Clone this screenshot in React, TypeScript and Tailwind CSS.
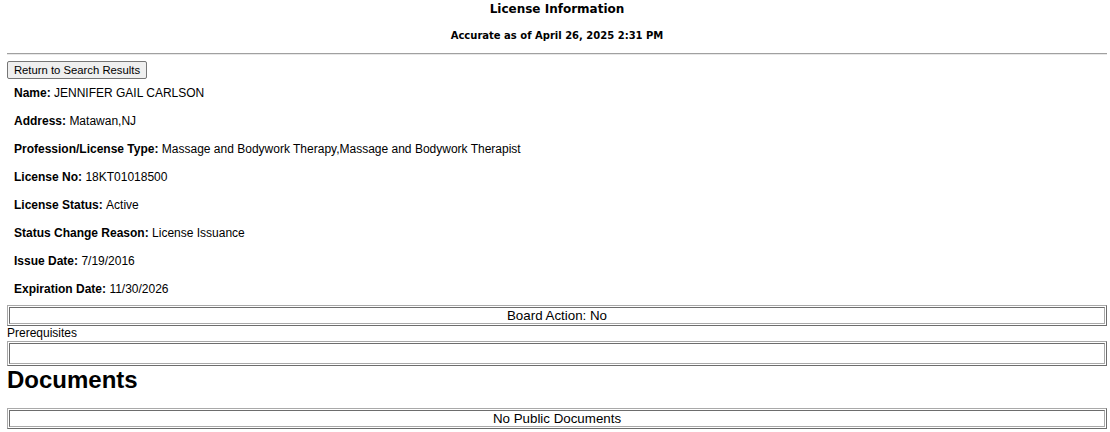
export default function App() {
  const fields = [
    { label: "Name", value: "JENNIFER GAIL CARLSON" },
    { label: "Address", value: "Matawan,NJ" },
    {
      label: "Profession/License Type",
      value: "Massage and Bodywork Therapy,Massage and Bodywork Therapist",
    },
    { label: "License No", value: "18KT01018500" },
    { label: "License Status", value: "Active" },
    { label: "Status Change Reason", value: "License Issuance" },
    { label: "Issue Date", value: "7/19/2016" },
    { label: "Expiration Date", value: "11/30/2026" },
  ]

  return (
    <div className="w-[1110px] h-[432px] bg-white text-black font-['Liberation_Sans',Arial,sans-serif] pl-[7px] pr-[3px]">
      <div className="text-center font-['DejaVu_Sans',Verdana,sans-serif] font-bold">
        <div className="text-[12px] leading-[14px] pt-[2px]">License Information</div>
        <div className="text-[10px] leading-[12px] mt-[14px]">Accurate as of April 26, 2025 2:31 PM</div>
      </div>

      <div className="mt-[11px] border-t border-t-[#a0a0a0] border-b border-b-[#e8e8e8]" />

      <button className="mt-[6px] h-[18px] w-[140px] bg-[#efefef] border border-[#767676] rounded-[2px] text-[11.3px] leading-[16px]">
        Return to Search Results
      </button>

      <div className="pl-[7px] -mt-[2px]">
        {fields.map((f) => (
          <div key={f.label} className="h-[28px] flex items-center text-[12px]">
            <span className="font-bold">{f.label}:</span>
            <span>&nbsp;{f.value}</span>
          </div>
        ))}
      </div>

      <Box className="mt-[2px]">Board Action: No</Box>
      <div className="text-[12px] leading-[14px]">Prerequisites</div>
      <Box className="mt-[1px]" inner="py-[2px]">&nbsp;</Box>

      <h2 className="text-[24px] font-bold leading-[28px]">Documents</h2>

      <Box className="mt-[14px]">No Public Documents</Box>
    </div>
  )
}

function Box({
  children,
  className = "",
  inner = "",
}: {
  children: React.ReactNode
  className?: string
  inner?: string
}) {
  return (
    <div
      className={`border border-t-[#a9a9a9] border-l-[#a9a9a9] border-b-[#6d6d6d] border-r-[#6d6d6d] p-[1px] ${className}`}
    >
      <div
        className={`border border-t-[#6d6d6d] border-l-[#6d6d6d] border-b-[#a9a9a9] border-r-[#a9a9a9] text-center text-[13.33px] leading-[15px] ${inner}`}
      >
        {children}
      </div>
    </div>
  )
}
